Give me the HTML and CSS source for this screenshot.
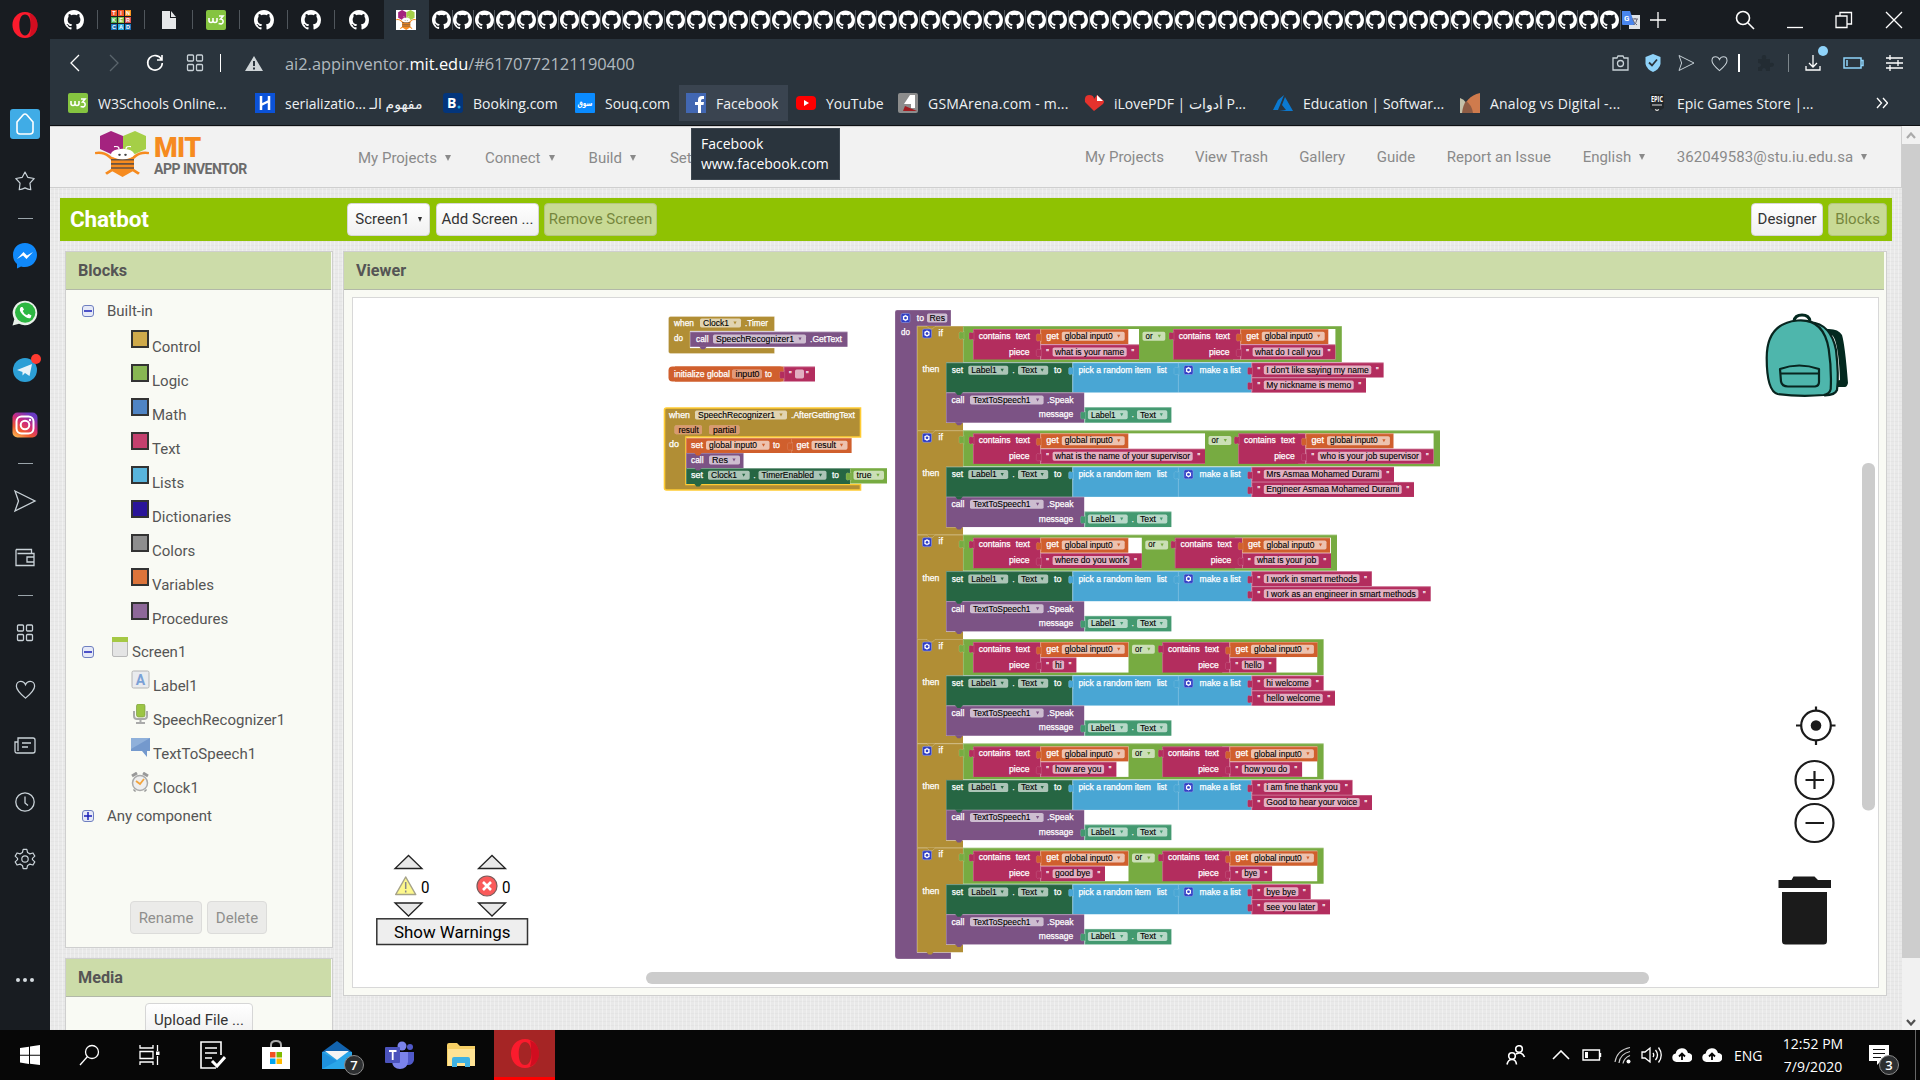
FILE: index.html
```html
<!DOCTYPE html>
<html lang="en">
<head>
<meta charset="utf-8">
<title>MIT App Inventor</title>
<link rel="stylesheet" href="styles.css">
</head>
<body>
<svg class="defs" width="0" height="0">
  <defs>
    <symbol id="gh" viewBox="0 0 16 16"><path fill="#fff" d="M8 0C3.58 0 0 3.58 0 8c0 3.54 2.29 6.53 5.47 7.59.4.07.55-.17.55-.38 0-.19-.01-.82-.01-1.49-2.01.37-2.53-.49-2.69-.94-.09-.23-.48-.94-.82-1.13-.28-.15-.68-.52-.01-.53.63-.01 1.08.58 1.23.82.72 1.21 1.87.87 2.33.66.07-.52.28-.87.51-1.07-1.78-.2-3.64-.89-3.64-3.95 0-.87.31-1.59.82-2.15-.08-.2-.36-1.02.08-2.12 0 0 .67-.21 2.2.82.64-.18 1.32-.27 2-.27s1.36.09 2 .27c1.53-1.04 2.2-.82 2.2-.82.44 1.1.16 1.92.08 2.12.51.56.82 1.27.82 2.15 0 3.07-1.87 3.75-3.65 3.95.29.25.54.73.54 1.48 0 1.07-.01 1.93-.01 2.2 0 .21.15.46.55.38A8.01 8.01 0 0 0 16 8c0-4.42-3.58-8-8-8z"/></symbol>
    <symbol id="w3" viewBox="0 0 20 20"><rect width="20" height="20" rx="2" fill="#85c440"/><path d="M3 8v2.500q0 2 2 2t2-2V8v2.500q0 2 2 2t2-2V8M13 6h4l-2.500 3q3 .3 2.600 3t-4.500 1.500" fill="none" stroke="#fff" stroke-width="1.600"/></symbol>
    <symbol id="bee" viewBox="0 0 54 56"><path d="M5 6 16 0l12 6v16l-12 6-11-6z" fill="#a4237f"/><path d="M28 6 40 0l11 6v16l-11 6-12-6z" fill="#a5cf47"/><path d="M0 27q8-2 14 4l6 6M54 27q-8-2-14 4l-6 6M11 52l9-7M44 52l-9-7" fill="none" stroke="#f68b1f" stroke-width="3"/><path d="M16 32h23v16l-11.500 8L16 48z" fill="#f68b1f"/><path d="M16 35h23M16 40h23M16 45h23" stroke="#6b5340" stroke-width="2"/><ellipse cx="27.500" cy="28" rx="11.500" ry="6.500" fill="#fff"/><path d="M24 22q0-4-5-3M31 22q0-4 5-3" stroke="#fff" stroke-width="1.300" fill="none"/><circle cx="24.500" cy="29" r="1.300" fill="#444"/><circle cx="30.500" cy="29" r="1.300" fill="#444"/></symbol>
    <symbol id="opera" viewBox="0 0 30 30"><path fill-rule="evenodd" fill="#fb1b2d" d="M15 0c8.500 0 14.500 7 14.500 15s-6 15-14.500 15S.5 23 .5 15 6.500 0 15 0zm0 3c-4.500 0-6.500 5.500-6.500 12s2 12 6.500 12 6.500-5.500 6.500-12-2-12-6.500-12z"/><path fill="#a70014" d="M20 1.500c6.500 2 9.500 7.500 9.500 13.500s-3 11.500-9.500 13.500c1.500-3 2-8.500 1.500-13.500S21.500 4.500 20 1.500z" opacity=".5"/></symbol>
    <symbol id="heart" viewBox="0 0 24 24"><path class="ln" d="M12 21C5 15 2.500 12 2.500 8.500 2.500 5.500 4.500 3.500 7 3.500c2.200 0 4 1.200 5 3.500 1-2.300 2.800-3.500 5-3.500 2.500 0 4.500 2 4.500 5C21.500 12 19 15 12 21z"/></symbol>
    <symbol id="send" viewBox="0 0 24 24"><path class="ln" d="M2 2l20 10L2 22l3.500-10z"/></symbol>
    <symbol id="grid" viewBox="0 0 18 18"><rect class="ln" x="1.500" y="1" width="6" height="6" rx="1"/><rect class="ln" x="10.500" y="1" width="6" height="6" rx="1"/><rect class="ln" x="1.500" y="10.500" width="6" height="6" rx="1"/><rect class="ln" x="10.500" y="10.500" width="6" height="6" rx="1"/></symbol>
    <symbol id="cloud" viewBox="0 0 20 14"><path fill="#fff" d="M4.500 14a4.300 4.300 0 0 1-.8-8.500A6.300 6.300 0 0 1 16 5a4.500 4.500 0 0 1 0 9z"/><path d="M10 12V6M7 8.500 10 5.500l3 3" stroke="#070707" stroke-width="1.800" fill="none"/></symbol>
  </defs>
</svg>

<div class="screen">
  <aside class="rail">
    <div class="rail-logo"><svg width="26" height="26"><use href="#opera"/></svg></div>
    <div class="ri"><span class="home"><svg width="30" height="30"><path class="ln w2" d="M7 13l6-7q2-2 4 0l6 7v9q0 3-3 3H10q-3 0-3-3z"/></svg></span></div>
    <div class="ri"><svg width="22" height="22" viewBox="0 0 24 24"><path class="ln" stroke-linejoin="round" d="M12 2.200l3 5.800 7 1.300-4.600 5 .9 7.200q-3-.2-6.300-2-3.300 1.800-6.300 2l.9-7.200L2 9.300 9 8z"/></svg></div>
    <div class="rd"></div>
    <div class="ri"><svg width="26" height="26"><path d="M13 0C5.500 0 1 5.500 1 12c0 4 1.500 7 4 9v4.500l4-2c9 2.500 16-4 16-11.500C25 5.500 20 0 13 0z" fill="#1089fa"/><path d="M5 16l6.500-7 3.500 3.500L21 9l-6.500 7-3.500-3.500z" fill="#fff"/></svg></div>
    <div class="ri"><svg width="26" height="26"><path d="M.5 25.500l1.800-6.300A12.300 12.300 0 1 1 7 23.800z" fill="#e9f1ea"/><circle cx="13.200" cy="12.600" r="10.200" fill="#2db742"/><path d="M9 7q-3 3 1.500 7.500T18.500 18l1-2.500-3-1.700-1.500 1.500q-3-1-4.300-4.300L12 9.500 10.500 7z" fill="#fff"/></svg></div>
    <div class="ri tg"><svg width="26" height="26"><circle cx="13" cy="14" r="12" fill="#2c9fd6"/><path d="M5 14l15-6-2.500 12-4.500-3-2.500 2.500V16z" fill="#e9f3f9"/></svg><i></i></div>
    <div class="ri"><svg width="26" height="26"><defs><linearGradient id="ig" x1="0" y1="1" x2=".6" y2="0"><stop offset="0" stop-color="#fdc95a"/><stop offset=".35" stop-color="#ef5a30"/><stop offset=".65" stop-color="#d02b7c"/><stop offset="1" stop-color="#6a3bc4"/></linearGradient></defs><rect x=".5" y=".5" width="25" height="25" rx="5" fill="url(#ig)"/><rect x="4.500" y="4.500" width="17" height="17" rx="5" fill="none" stroke="#fff" stroke-width="2"/><circle cx="13" cy="13" r="4.300" fill="none" stroke="#fff" stroke-width="2"/><circle cx="18" cy="8" r="1.200" fill="#fff"/></svg></div>
    <div class="rd"></div>
    <div class="ri"><svg width="24" height="24"><use href="#send"/></svg></div>
    <div class="ri"><svg width="22" height="20"><path class="ln" d="M2 1.500h15.500v4M2 1.500v16h18v-12H3.500M20 9h-7v5h7"/></svg></div>
    <div class="rd"></div>
    <div class="ri"><svg width="18" height="18"><use href="#grid"/></svg></div>
    <div class="ri"><svg width="23" height="23"><use href="#heart"/></svg></div>
    <div class="ri"><svg width="22" height="18"><path class="ln" d="M4 1h15q2 0 2 2v11q0 2-2 2H3q-2 0-2-2V5h3zM4 3v11M8 6h9M8 10h6"/></svg></div>
    <div class="ri"><svg width="22" height="22"><circle class="ln" cx="11" cy="11" r="9.200"/><path class="ln" d="M11 5.500V12l3 2.500"/></svg></div>
    <div class="ri"><svg width="22" height="22" viewBox="0 0 24 24"><path class="ln" stroke-linejoin="round" d="M10 1.500h4l.8 3.500 2.500 1.400 3.400-1 2 3.500-2.600 2.400v1.400l2.600 2.400-2 3.500-3.400-1-2.500 1.400-.8 3.500h-4L9.200 19l-2.500-1.400-3.400 1-2-3.500 2.600-2.400v-1.400L1.300 8.900l2-3.500 3.400 1L9.200 5z"/><circle class="ln" cx="12" cy="12" r="3.500"/></svg></div>
    <div class="dots"><i></i><i></i><i></i></div>
  </aside>

  <div class="browser">
    <div class="tabs">
      <div class="tab"><svg width="20" height="20"><use href="#gh"/></svg></div>
      <div class="tab"><svg width="20" height="20"><g><path fill="#f2562b" d="M0 0h6v6H0zM7 0h6v6H7z"/><path fill="#f7931e" d="M14 0h6v6h-6z"/><path fill="#4caf50" d="M0 7h6v6H0z"/><path fill="#8bc34a" d="M7 7h6v6H7z"/><path fill="#d9534f" d="M14 7h6v6h-6z"/><path fill="#1b75bb" d="M0 14h6v6H0zM14 14h6v6h-6z"/><path fill="#29abe2" d="M7 14h6v6H7z"/></g><g class="tk"><text x="3" y="5">T</text><text x="10" y="5">I</text><text x="17" y="5">N</text><text x="3" y="12">K</text><text x="10" y="12">E</text><text x="17" y="12">R</text><text x="3" y="19">C</text><text x="10" y="19">A</text><text x="17" y="19">D</text></g></svg></div>
      <div class="tab"><svg width="16" height="20"><path d="M1 1h8v7h6v11H1z" fill="#e6e8ea"/><path d="M10 1l5 6h-5z" fill="#e6e8ea"/></svg></div>
      <div class="tab"><svg width="20" height="20"><use href="#w3"/></svg></div>
      <div class="tab"><svg width="20" height="20"><use href="#gh"/></svg></div>
      <div class="tab"><svg width="20" height="20"><use href="#gh"/></svg></div>
      <div class="tab last"><svg width="20" height="20"><use href="#gh"/></svg></div>
      <div class="tab active"><span class="fav"><svg width="20" height="20"><use href="#bee"/></svg></span></div>
      <div class="many" id="many"></div>
      <div class="tr"><svg width="20" height="20"><rect x="8" y="5" width="11" height="14" fill="#dfe3e8"/><path d="M1 1h8l5 14H2q-1 0-1-1z" fill="#4a86ee"/><text x="3" y="11" font-size="8" font-weight="bold" fill="#fff">G</text><path d="M11 9h6M14 8v1M12.500 15q3-2 3.500-6M12 10q1 3 4 5" stroke="#667" fill="none"/></svg></div>
      <svg class="plus" width="16" height="16"><path class="ln w" d="M8 0v16M0 8h16"/></svg>
      <div class="wc">
        <svg width="20" height="20"><circle class="ln w2" cx="8" cy="8" r="6.500"/><path class="ln w2" d="M13 13l6 6"/></svg>
        <svg width="16" height="20"><path class="ln w" d="M0 17.500h16"/></svg>
        <svg width="18" height="18"><path class="ln w" d="M5 5V1.500h11.500V13H12M1 5h11v11.500H1z"/></svg>
        <svg width="18" height="18"><path class="ln w" d="M1 1l16 16M17 1L1 17"/></svg>
      </div>
    </div>

    <div class="bar">
      <div class="nav">
        <svg width="12" height="18"><path class="ln w" d="M10 1L2 9l8 8"/></svg>
        <svg width="12" height="18"><path class="ln dim" d="M2 1l8 8-8 8"/></svg>
        <svg width="18" height="18"><path class="ln w2" d="M15.500 5.500A7.300 7.300 0 1 0 16.300 9M16 1v5h-5"/></svg>
        <svg width="18" height="18"><use href="#grid"/></svg>
        <i class="sep"></i>
        <svg width="18" height="17"><path d="M9 1l9 15H0z" fill="#cfd5d8"/><path d="M9 6v5M9 12.500v2" stroke="#2a343d" stroke-width="2"/></svg>
        <span class="url">ai2.appinventor.<b>mit.edu</b>/#6170772121190400</span>
      </div>
      <div class="tools">
        <svg width="17" height="16"><path class="ln" d="M1 3h4l1-2h5l1 2h4v12H1z"/><circle class="ln" cx="8.500" cy="8.500" r="3"/></svg>
        <svg width="16" height="18"><path d="M8 0l7.500 3v7q-1 5-7.500 8Q1.500 15 .5 10V3z" fill="#8fd3fa"/><path d="M4 8.500l3 3 5-6" fill="none" stroke="#2a343d" stroke-width="1.800"/></svg>
        <svg width="19" height="18" viewBox="0 0 24 24"><use href="#send"/></svg>
        <svg width="19" height="19"><use href="#heart"/></svg>
        <i class="sep b"></i>
        <svg width="18" height="18"><path d="M2 5h4q-1-4 2-4t2 4h4v4q4-1 4 1.500T14 13v4h-4q0-3-2-3t-2 3H2v-4q3 0 3-2T2 9z" fill="#232c33"/></svg>
        <i class="sep g"></i>
        <div class="dl"><svg width="16" height="16"><path class="ln w" d="M8 0v12M4 8l4 4 4-4M1 11v4h14v-4"/></svg><i></i></div>
        <svg width="21" height="12"><path d="M1 1h17v10H1zM18 3.500h2v5h-2M4 3v6" fill="none" stroke="#8fd3fa" stroke-width="1.500"/></svg>
        <svg width="17" height="16"><path class="ln w" d="M0 3h17M0 8h17M0 13h17M4 0v5M12 5v6M4 10v6"/></svg>
      </div>
    </div>

    <div class="marks">
      <div class="bm"><svg width="20" height="20"><use href="#w3"/></svg><span>W3Schools Online...</span></div>
      <div class="bm m2"><svg width="20" height="20"><rect width="20" height="20" fill="#0b52d8"/><path d="M6 3v14M14 3v14M6 12l8-4" stroke="#fff" stroke-width="2.500"/></svg><span dir="ltr">serializatio... مفهوم الـ</span></div>
      <div class="bm"><svg width="20" height="20"><rect width="20" height="20" rx="3" fill="#03357c"/><text x="4" y="15" font-size="14" font-weight="bold" fill="#fff">B</text><circle cx="16" cy="14" r="1.500" fill="#1ba7e6"/></svg><span>Booking.com</span></div>
      <div class="bm"><svg width="20" height="20"><rect width="20" height="20" rx="1" fill="#0a8bff"/><text x="10" y="12.500" font-size="8" font-weight="bold" text-anchor="middle" textLength="15" lengthAdjust="spacingAndGlyphs" fill="#fff">سوق</text></svg><span>Souq.com</span></div>
      <div class="bm hover"><svg width="20" height="20"><rect width="20" height="20" fill="#4267b2"/><path d="M12 20v-8h-3V9h3V7q0-4 4-4h2v3h-1.500Q15 6 15 7.500V9h3l-.5 3H15v8z" fill="#fff"/></svg><span>Facebook</span>
        <div class="tip">Facebook<br>www.facebook.com</div></div>
      <div class="bm"><svg width="20" height="20"><rect y="3" width="20" height="14" rx="4" fill="#f00"/><path d="M8 7l5 3-5 3z" fill="#fff"/></svg><span>YouTube</span></div>
      <div class="bm wide"><svg width="20" height="20"><rect width="20" height="20" rx="2" fill="#8c8c8c"/><path d="M12 2h5v13h-4v-4H6z" fill="#fff"/><path d="M7 13l12 5H5z" fill="#a11d21"/></svg><span>GSMArena.com - m...</span></div>
      <div class="bm"><svg width="20" height="20"><path d="M10 18L1 9Q0 2 5 2t5 4l3-4 7 6q0 2-1 3z" fill="#e5322d"/><path d="M13 2v6h6z" fill="#fff"/></svg><span dir="ltr">iLovePDF | أدوات P...</span></div>
      <div class="bm az"><svg width="20" height="20"><path d="M11 2L5 7 0 17h5zM12 4l8 14H6l7-1-4-5z" fill="#0b79d0"/></svg><span>Education | Softwar...</span></div>
      <div class="bm wide"><svg width="20" height="20"><path d="M0 5q8 2 8 15H0z" fill="#c3c1aa"/><path d="M20 0v20H3Q5 3 20 0z" fill="#cf7b4d"/><path d="M6 8q6 4 7 12H2q1-8 4-12z" fill="#8e5c44"/></svg><span>Analog vs Digital -...</span></div>
      <div class="bm ep"><svg width="18" height="20"><path d="M2 1h14v14l-7 4-7-4z" fill="#22272b"/><text x="9" y="9" font-size="8.500" font-weight="bold" text-anchor="middle" textLength="12" lengthAdjust="spacingAndGlyphs" fill="#fff">EPIC</text><path d="M4 12h10M7 16.500l2 1 2-1" stroke="#ddd" stroke-width="1.200" fill="none"/></svg><span>Epic Games Store |...</span></div>
      <svg class="more" width="12" height="12"><path class="ln w" d="M1 1l4.500 5L1 11M7 1l4.500 5L7 11"/></svg>
    </div>

    <div class="page">
      <div class="content">
        <header class="head">
          <div class="logo"><svg width="54" height="46" viewBox="0 0 54 56" preserveAspectRatio="none"><use href="#bee"/></svg><div><b>MIT</b><em>APP INVENTOR</em></div></div>
          <nav class="lnav"><span>My Projects<i></i></span><span>Connect<i></i></span><span>Build<i></i></span><span>Set</span></nav>
          <nav class="rnav"><span>My Projects</span><span>View Trash</span><span>Gallery</span><span>Guide</span><span>Report an Issue</span><span>English<i></i></span><span class="mailto">362049583@stu.iu.edu.sa<i></i></span></nav>
        </header>
        <div class="green">
          <h1>Chatbot</h1>
          <button class="btn s1">Screen1<i></i></button><button class="btn s2">Add Screen ...</button><button class="btn s3 off">Remove Screen</button>
          <button class="btn s4">Designer</button><button class="btn s5 off">Blocks</button>
        </div>
        <div class="cols">
          <div class="left">
            <section class="panel blocks">
              <h2>Blocks</h2>
              <div class="tree" id="tree"></div>
              <div class="acts"><button class="btn dis">Rename</button><button class="btn dis">Delete</button></div>
            </section>
            <section class="panel media"><h2>Media</h2><button class="btn up">Upload File ...</button></section>
          </div>
          <section class="panel viewer">
            <h2>Viewer</h2>
            <div class="canvas"><svg id="ws" width="1525" height="689" viewBox="353 298 1525 689"></svg></div>
          </section>
        </div>
      </div>
      <div class="scroll"><span><svg width="10" height="7"><path d="M1 6l4-4.500L9 6" fill="none" stroke="#aaa" stroke-width="2.200"/></svg></span><i></i><span class="dn"><svg width="10" height="7"><path d="M1 1l4 4.500L9 1" fill="none" stroke="#505050" stroke-width="2.200"/></svg></span></div>
    </div>
  </div>
</div>

<footer class="taskbar">
  <div class="ti"><svg width="20" height="20"><path d="M0 3l9-1.300v8H0zM10 1.500L20 0v9.700H10zM0 10.700h9v8.200L0 17.500zM10 10.700h10V20l-10-1.300z" fill="#fff"/></svg></div>
  <div class="ti"><svg width="22" height="22"><circle class="ln w" cx="13" cy="8" r="6.500"/><path class="ln w" d="M8.500 12.500L1 21"/></svg></div>
  <div class="ti"><svg width="22" height="22"><path class="ln w" d="M1 1v3h13V1M1 7.500h13v7H1zM1 21v-3h13v3M18.500 1v6M18.500 12v9"/><rect x="17" y="7.500" width="3.500" height="3.500" fill="#fff"/></svg></div>
  <div class="ti t4"><svg width="26" height="28"><path class="ln w2" d="M21 14V1H1v26h15M5 7h12M5 12h12M5 17h7"/><path d="M12 20l5 5 8-9" fill="none" stroke="#fff" stroke-width="3"/></svg></div>
  <div class="ti t5"><svg width="30" height="30"><path d="M10 8V5q0-4 5-4t5 4v3" fill="none" stroke="#aaa" stroke-width="2"/><path d="M1 7h28v22H1z" fill="#fff"/><path fill="#f25022" d="M9 12h5.500v5.500H9z"/><path fill="#7fba00" d="M15.500 12H21v5.500h-5.500z"/><path fill="#00a4ef" d="M9 18.500h5.500V24H9z"/><path fill="#ffb900" d="M15.500 18.500H21V24h-5.500z"/></svg></div>
  <div class="ti mail"><svg width="30" height="28"><path d="M0 11L15 0l15 11z" fill="#1263ae"/><path d="M0 11h30v17H0z" fill="#2aa5e8"/><path d="M3 10h24L15 19z" fill="#f4f4f4"/><path d="M0 11l15 9L0 28z" fill="#1e90dc"/></svg><i>7</i></div>
  <div class="ti"><svg width="30" height="28"><circle cx="18" cy="5" r="4.500" fill="#7b83eb"/><circle cx="26" cy="6" r="3" fill="#5059c9"/><path d="M21 11h9v8q-1 5-6 5h-3z" fill="#5059c9"/><path d="M9 11h15v10q-1 7-8 7t-8-7z" fill="#7b83eb"/><rect x="1" y="6" width="15" height="16" rx="1" fill="#4b53bc"/><path d="M5 10h7.500M8.700 10v9" stroke="#fff" stroke-width="1.800"/></svg></div>
  <div class="ti"><svg width="28" height="24"><path d="M0 2q0-2 2-2h8l3 3h15v20H0z" fill="#f5cf65"/><path d="M1 6h27v17H1z" fill="#ffe394"/><path d="M5 24v-8q0-2 2-2h14q2 0 2 2v8h-5v-4h-8v4z" fill="#3fb2e3"/></svg></div>
  <div class="ti op"><svg width="30" height="29"><use href="#opera"/></svg></div>
  <div class="tray">
    <svg class="pp" width="20" height="20"><circle class="ln w2" cx="13" cy="4" r="3.300"/><circle class="ln w2" cx="6" cy="11" r="3.300"/><path class="ln w2" d="M1 19.500q1-5 5-5t4.500 5M10 9q6-3 8.500 3"/></svg>
    <svg width="18" height="10"><path class="ln w2" d="M1 9l8-8 8 8"/></svg>
    <svg width="20" height="12"><path d="M1 1h16.500v10H1zM18.500 4v4" fill="none" stroke="#fff" stroke-width="1.400"/><path d="M3 3h3v6H3z" fill="#fff"/></svg>
    <svg width="18" height="18"><path d="M1 16Q3 4 16 1.500M5 17Q6 8 16 5.500M9 17.500Q10 12 16 9.500" fill="none" stroke="#ccc" stroke-width="1.200"/><circle cx="14.500" cy="15.500" r="2" fill="#fff"/></svg>
    <svg width="21" height="18"><path class="ln w" d="M1 6h3l5-4v14l-5-4H1zM12 7q1.500 2 0 4M14.500 4q4 5 0 10M17.500 1.500q5.500 7.500 0 15"/></svg>
    <svg width="20" height="14"><use href="#cloud"/></svg>
    <svg width="20" height="14"><use href="#cloud"/></svg>
    <span class="eng">ENG</span>
    <span class="clock">12:52 PM<br>7/9/2020</span>
    <div class="note"><svg width="20" height="20"><path d="M0 0h20v16h-8l-4 4v-4H0z" fill="#fff"/><path d="M4 4.500h12M4 8.500h12M4 12.500h8" stroke="#111" stroke-width="1.200"/></svg><i>3</i></div>
    <div class="peek"></div>
  </div>
</footer>
<script src="app.js"></script>
</body>
</html>
```
FILE: styles.css
```css
* { box-sizing: border-box; }
body { margin: 0; width: 1920px; height: 1080px; overflow: hidden; font-family: Roboto, sans-serif; font-size: 15px; background: #070707; }
svg { display: block; flex: none; }
i, em { font-style: normal; }
.defs { position: absolute; }
.ln { fill: none; stroke: #c9d2d8; stroke-width: 1.3; }
.ln.w { stroke: #fff; }
.ln.w2 { stroke: #fff; stroke-width: 1.6; }
.ln.dim { stroke: #5a646c; }
.screen { display: flex; height: 1030px; }

.rail { width: 50px; background: #181c21; display: flex; flex-direction: column; align-items: center; }
.rail-logo { height: 96px; padding-top: 12px; }
.ri { height: 56.35px; display: flex; align-items: center; justify-content: center; position: relative; }
.rd { height: 19.5px; width: 15px; display: flex; align-items: center; }
.rd::after { content: ""; width: 15px; height: 1px; background: #9aa4aa; }
.home { width: 30px; height: 30px; border-radius: 3px; background: #40ace6; }
.tg i { position: absolute; right: -3px; top: 13px; width: 10px; height: 10px; border-radius: 5px; background: #ff3b30; }
.dots { display: flex; gap: 3px; margin-top: 91px; }
.dots i { width: 4px; height: 4px; border-radius: 2px; background: #d5dbe0; }

.browser { flex: 1; display: flex; flex-direction: column; min-width: 0; }
.tabs { height: 39px; background: #181c21; display: flex; align-items: center; }
.tab { width: 47.5px; height: 38px; display: flex; align-items: center; justify-content: center; position: relative; flex: none; }
.tab::after { content: ""; position: absolute; right: 0; top: 9px; width: 1px; height: 19px; background: #50565c; }
.tab.last::after, .tab.active::after { display: none; }
.tab.active { width: 45px; margin-left: 1px; background: #2a343d; height: 39px; }
.fav { background: #fff; }
.tk { font: bold 5.500px "Liberation Sans", sans-serif; fill: #fff; text-anchor: middle; }
.many { display: flex; width: 1189.5px; margin-left: 3px; flex: none; }
.many span { width: 21.24px; display: flex; justify-content: center; border-right: 1px solid #50565c; flex: none; }
.tr { width: 22px; }
.plus { margin-left: 7px; margin-right: 69px; }
.wc { display: flex; gap: 32px; align-items: center; }

.bar { height: 46px; background: #2a343d; display: flex; align-items: center; justify-content: space-between; padding: 2px 17px 0 19px; }
.nav, .tools { display: flex; align-items: center; }
.nav svg:nth-child(2) { margin-left: 27px; }
.nav svg:nth-child(3) { margin-left: 26px; }
.nav svg:nth-child(4) { margin-left: 22px; }
.sep { width: 1px; height: 18px; background: #fff; margin: 0 24px 0 16px; }
.sep.b { width: 2px; margin: 0 16px 0 9px; }
.sep.g { background: #7d868c; margin: 0 16px 0 14px; }
.url { font-family: "Open Sans", sans-serif; font-size: 16.4px; color: #b1b9bf; margin-left: 22px; white-space: nowrap; }
.url b { color: #fff; font-weight: 400; }
.tools svg:nth-child(2), .tools svg:nth-child(3) { margin-left: 16px; }
.tools svg:nth-child(4) { margin-left: 14px; }
.dl { position: relative; }
.dl i { position: absolute; left: 13px; top: -9px; width: 10px; height: 10px; border-radius: 5px; background: #8fd3fa; }
.dl + svg { margin-left: 22px; margin-right: 22px; }

.marks { height: 41px; background: #2a343d; border-bottom: 1px solid #0d1013; display: grid; grid-template-columns: 187px 188px 132px 111px 110px 102px 186px 189px 187px 188px 228px 20px; align-items: start; padding: 0 0 0 18px; font: 14px "Open Sans", "Noto Sans", "DejaVu Sans", sans-serif; color: #eef1f3; position: relative; }
.bm { display: flex; align-items: center; gap: 10px; height: 36px; white-space: nowrap; }
.bm.wide { letter-spacing: .2px; }
.bm.ep { gap: 11px; }
.bm.hover { background: #3a4450; margin-left: -7px; margin-right: 8px; padding-left: 7px; position: relative; gap: 10px; }
.tip { position: absolute; left: 12px; top: 43px; width: 149px; height: 52px; padding: 5px 9px; background: #2a343d; border: 1px solid #3c464f; color: #fff; line-height: 20px; z-index: 5; }
.more { margin-top: 12px; }

.page { flex: 1; display: flex; overflow: hidden; }
.content { width: 1852px; background-color: #e9e9e9; background-image: repeating-linear-gradient(90deg, rgba(255,255,255,.35) 0 1px, transparent 1px 4px), repeating-linear-gradient(0deg, rgba(0,0,0,.025) 0 1px, transparent 1px 4px); }
.scroll { width: 18px; background: #f1f1f1; display: flex; flex-direction: column; align-items: center; }
.scroll span { height: 18px; display: flex; align-items: center; }
.scroll > i { width: 18px; height: 814px; background: #cdcdcd; }
.scroll .dn { margin-top: auto; height: 16px; }

.head { height: 62px; background: #f2f2f2; border: 1px solid #cfcfcf; border-left: 0; display: flex; align-items: center; color: #8a8a8a; }
.logo { display: flex; padding-left: 45px; width: 308px; gap: 5px; padding-bottom: 6px; flex: none; }
.logo div { display: flex; flex-direction: column; }
.logo b { color: #f68b1f; font-size: 27px; line-height: 27px; margin-top: 4px; letter-spacing: -.6px; font-weight: 900; }
.logo em { color: #6b6b6b; font-weight: 700; font-size: 14px; line-height: 16px; letter-spacing: -.5px; white-space: nowrap; margin-top: -1px; }
.lnav, .rnav { display: flex; white-space: nowrap; }
.lnav { gap: 34px; width: 727px; padding-top: 1px; flex: none; }
.rnav { gap: 31px; }
.rnav span:nth-child(n+4) { margin-left: .6px; }
.rnav .mailto { letter-spacing: .08px; margin-left: 3px; }
.head nav i, .btn i { display: inline-block; border: 3px solid transparent; border-top: 6px solid #8a8a8a; border-bottom: 0; margin-left: 8px; vertical-align: 2px; }
.green { margin: 10px 10px 0; height: 43px; background: #8fc202; display: flex; align-items: center; padding: 0 0 1px 10px; }
.green h1 { margin: 0; width: 277px; font-size: 22.5px; color: #fff; letter-spacing: -.2px; }
.btn { font: 15px Roboto, sans-serif; color: #333; height: 33px; border: 1px solid #d6d6d6; border-radius: 4px; background: linear-gradient(#fff, #f0f0f0); padding: 0; white-space: nowrap; }
.btn i { border-width: 5px 2.5px 0; border-top-color: #333; margin-left: 8px; }
.btn.off { background: #c8da95; border-color: #b4c67f; color: #76873d; }
.btn.dis { background: #ebebe9; border-color: #dcdcda; color: #8f8f8d; }
.s1 { width: 83px; } .s2 { width: 103px; margin-left: 6px; } .s3 { width: 113px; margin-left: 5px; }
.s4 { width: 72px; margin-left: 1094px; } .s5 { width: 59px; margin-left: 5px; }

.cols { display: flex; padding: 10px 0 0 15px; gap: 10px; }
.left { width: 268px; display: flex; flex-direction: column; gap: 10px; }
.panel { background: #f9faf4; border: 1px solid #cfcfcf; }
.panel h2 { margin: 0 1px 0 0; height: 38px; line-height: 37px; padding-left: 12px; font-size: 16.2px; color: #555; background: #ccdca9; border-bottom: 1px solid #b2b8a8; }
.blocks { height: 697px; display: flex; flex-direction: column; }
.tree { flex: 1; padding: 4px 0 0 16px; color: #555; }
.row { display: flex; align-items: center; height: 34px; }
.row:first-child { margin-bottom: 1px; }
.row .tg2 { width: 12px; height: 12px; border: 1.5px solid #6f7fc0; border-radius: 3px; background: #e6e9f7; display: flex; align-items: center; justify-content: center; margin-top: -1px; }
.row.child { padding-left: 49px; gap: 3px; align-items: flex-start; }
.row.child span { padding-top: 9px; }
.row.child svg + span { padding-top: 8px; }
.sw { width: 18px; height: 18px; border: 2px solid #333; margin-top: 1px; }
.row.child svg { margin-top: 1px; }
.acts { display: flex; gap: 5px; padding: 0 0 13px 64px; }
.acts .btn:nth-child(1) { width: 72px; } .acts .btn:nth-child(2) { width: 60px; }
.media { height: 140px; display: flex; flex-direction: column; }
.up { margin: 6px 0 0 79px; width: 108px; }
.viewer { width: 1544px; height: 745px; }
.viewer h2 { margin-right: 2px; }
.canvas { margin: 7px 8px 0; background: #fff; border: 1px solid #d8d8d8; height: 691px; width: 1527px; }
.canvas text { font: 8.5px "Liberation Sans", sans-serif; fill: #000; }
.canvas text.d { stroke: #000; stroke-width: .12px; }
.canvas text.l { fill: #fff; stroke: #fff; stroke-width: .25px; }
.canvas text.ui { font: 16.500px Roboto, sans-serif; }

.taskbar { height: 50px; background: #070707; display: flex; color: #fff; font-family: "Open Sans", sans-serif; }
.ti { width: 62px; display: flex; align-items: center; justify-content: center; position: relative; }
.ti:nth-child(1) { width: 60px; } .ti:nth-child(2) { width: 60px; } .ti:nth-child(3) { width: 60px; }
.ti.t4 { width: 66px; }
.ti.t5 { width: 60px; }
.ti.op { background: #a52525; border-bottom: 3px solid #f00; margin-left: 2px; width: 61px; }
.ti.mail i, .note i { position: absolute; left: 38px; top: 25px; width: 20px; height: 20px; border-radius: 50%; background: #2d2f31; border: 1px solid #8a8a8a; font-size: 13px; font-weight: 600; line-height: 18px; text-align: center; }
.tray { margin-left: auto; display: flex; align-items: center; font-size: 14.5px; }
.tray svg { margin-right: 10px; }
.tray .pp { margin-right: 26px; }
.tray svg:nth-child(2) { margin-right: 12px; }
.tray svg:nth-child(3) { margin-right: 12px; }
.tray svg:nth-child(4) { margin-right: 9px; }
.eng { width: 29px; margin-left: 2px; font-size: 14px; }
.clock { text-align: center; line-height: 23px; width: 62px; margin-left: 19px; white-space: nowrap; font-size: 14px; }
.note { margin-left: 25px; width: 46px; position: relative; height: 50px; padding-top: 15px; }
.note i { left: 10px; }
.peek { width: 5px; height: 50px; border-left: 1px solid #666; }
```
FILE: app.js
```js
// Narrow GitHub tabs
document.getElementById('many').innerHTML =
  '<span><svg width="19" height="20"><use href="#gh"/></svg></span>'.repeat(56);

// Blocks tree
const toggle = plus => `<div class="tg2"><svg width="8" height="8"><path d="M0 4h8${plus ? 'M4 0v8' : ''}" stroke="#1a1fb8" stroke-width="1.500"/></svg></div>`;
const swatches = [['Control', '#cfaa4b'], ['Logic', '#88b653'], ['Math', '#4f84c4'], ['Text', '#c4406e'], ['Lists', '#58b4dc'],
  ['Dictionaries', '#2a1599'], ['Colors', '#8e8e8e'], ['Variables', '#dc743a'], ['Procedures', '#8e6899']];
const comps = [
  ['Label1', '<rect x="1" y="1" width="17" height="17" rx="1.500" fill="#e9ebee" stroke="#b4b4b4"/><text x="9.500" y="14.500" font-size="14" font-weight="bold" text-anchor="middle" fill="#7ba1d6">A</text>'],
  ['SpeechRecognizer1', '<path d="M3 7v5q0 3 3 3h7q3 0 3-3V7M9.500 15v3M5 19h9" fill="none" stroke="#aaa" stroke-width="2"/><rect x="5.500" y="0" width="8.500" height="13" rx="2" fill="#9cc544" stroke="#7d9b43" stroke-width=".7"/>'],
  ['TextToSpeech1', '<path d="M0 0h19v13h-3v6l-5-6H0z" fill="#7499cd"/><path d="M0 0h19L0 11z" fill="#8fb0da"/>'],
  ['Clock1', '<circle cx="9" cy="11" r="7.500" fill="#efefef" stroke="#aaa" stroke-width="1.500"/><path d="M1 4l5-3M17 4l-5-3M4 18l-1 1M14 18l1 1" stroke="#999" stroke-width="3"/><path d="M5 9l4 3 4-5" fill="none" stroke="#f3a43c" stroke-width="1.800"/>']];
let t = `<div class="row">${toggle(0)}<span style="margin-left:13px">Built-in</span></div>`;
swatches.forEach(([n, c]) => t += `<div class="row child"><div class="sw" style="background:${c}"></div><span>${n}</span></div>`);
t += `<div class="row">${toggle(0)}<svg style="margin:-10px 4px 0 18px" width="16" height="20"><rect x=".5" y=".5" width="15" height="19" rx="1.500" fill="#e4e4e4" stroke="#b8b8b8"/><path d="M0 0h16v5H0z" fill="#a5c844"/></svg><span>Screen1</span></div>`;
comps.forEach(([n, g]) => t += `<div class="row child"><svg width="19" height="20">${g}</svg><span>${n}</span></div>`);
t += `<div class="row" style="height:22px">${toggle(1)}<span style="margin-left:13px">Any component</span></div>`;
document.getElementById('tree').innerHTML = t;

// Block workspace
const C = { proc: '#7c5385', ctl: '#b18e35', vr: '#d05f2d', txt: '#b32d5e', log: '#77ab41', set: '#266643', lst: '#49a6d4', get: '#439970' };
let o = '';
const R = (x1, y1, x2, y2, c, extra = '') => o += `<rect x="${x1}" y="${y1}" width="${x2 - x1}" height="${y2 - y1}" fill="${c}" ${extra}/>`;
const B = (x1, y1, x2, y2, c) => { R(x1, y1, x2, y2, c); o += `<path d="M${x1 + .4} ${y2}V${y1 + .4}H${x2}" fill="none" stroke="#fff" stroke-opacity=".3" stroke-width=".8"/>`; };
const P = (d, c, extra = 'stroke="#fff" stroke-opacity=".3" stroke-width=".8"') => o += `<path d="${d}" fill="${c}" ${extra}/>`;
const T = (x1, x2, y, s, cls = 'l') => o += `<text class="${cls}" x="${x1}" y="${y}" textLength="${x2 - x1}" lengthAdjust="spacingAndGlyphs">${s}</text>`;
const pill = (x1, x2, y, c = '#fff', h = 9) => R(x1, y, x2, y + h, c, 'rx="1.700" fill-opacity=".62"');
const arrow = (x, y, c) => o += `<path d="M${x - 1.6} ${y - 1.5}h3.200l-1.600 3z" fill="${c}"/>`;
const drop = (x1, x2, tx2, y, s, c) => { pill(x1, x2, y); T(x1 + 3, tx2, y + 7.3, s, 'd'); arrow(x2 - 6, y + 4.5, c); };
const tab = (x, y, c) => o += `<path d="M${x + 1} ${y + 4}q-1 2-2.500 1t-2.500 1v5q1 2 2.500 1t2.500 1z" fill="${c}" stroke="#fff" stroke-opacity=".2" stroke-width=".6"/>`;
const notch = (x, y, c) => o += `<path d="M${x} ${y - .5}h8l-2.500 3h-3z" fill="${c}"/>`;
const gear = (x, y) => { R(x, y, x + 9, y + 9, '#2f3ec4', 'rx="1.500" stroke="#8f9be8" stroke-width=".6"'); o += `<circle cx="${x + 4.5}" cy="${y + 4.5}" r="2" fill="none" stroke="#fff" stroke-width="1.300"/><path d="M${x + 4.5} ${y + 1.3}v6.400M${x + 1.7} ${y + 2.9}l5.600 3.200M${x + 1.7} ${y + 6.1}l5.600-3.200" stroke="#fff" stroke-width=".6"/><circle cx="${x + 4.5}" cy="${y + 4.5}" r="1.200" fill="#2f3ec4"/>`; };
const str = (x, y, r, s) => { B(x, y, r, y + 15, C.txt); tab(x, y, C.txt); T(x + 6, x + 8.6, y + 10.5, '"'); pill(x + 12.3, r - 12.3, y + 3); T(x + 14.8, r - 14.8, y + 10.3, s, 'd'); T(r - 7.6, r - 5, y + 10.5, '"'); };

// when Clock1.Timer
P('M670.500 316.500H774.500V331H690V348H774.500V353.500H670.500Q668.500 353.500 668.500 351.500V318.500Q668.500 316.500 670.500 316.500z', C.ctl);
T(674, 694, 326, 'when'); drop(700, 741, 729, 318.5, 'Clock1', C.ctl); T(745, 768, 326, '.Timer');
T(674, 683, 341, 'do'); B(690, 331.7, 847.5, 346.8, C.proc); notch(699, 346.8, C.proc);
T(696, 708.5, 341.5, 'call'); drop(713, 806, 794, 334.5, 'SpeechRecognizer1', C.proc); T(810, 842, 341.5, '.GetText');
// initialize global
R(668.5, 366.5, 783.7, 381.5, C.vr, 'rx="4"'); R(675, 366.5, 783.7, 381.5, C.vr);
T(674, 730, 376.8, 'initialize global'); pill(732, 762, 369.500, '#fff'); R(732, 369.5, 762, 378.5, C.vr, 'rx="1.700" fill-opacity=".4"'); T(735.500, 759.500, 376.8, 'input0', 'd'); T(765, 772, 376.8, 'to');
B(783.7, 366.5, 815, 381.5, C.txt); tab(783.7, 366.5, C.txt); T(789, 791.600, 377, '"'); pill(795, 804, 369.5); T(806, 808.600, 377, '"');
// when SpeechRecognizer1.AfterGettingText
P('M666.500 408H860.500V437H686V484.500H860.500V490H666.500Q664.500 490 664.500 488V410Q664.500 408 666.500 408z', C.ctl, 'stroke="#fc3" stroke-width="1.600"');
T(669, 690, 418, 'when'); drop(695, 787, 775, 410.500, 'SpeechRecognizer1', C.ctl); T(791, 855, 418, '.AfterGettingText');
[[674.5, 702, 'result'], [709, 739.5, 'partial']].forEach(([a, b, s]) => { pill(a, b, 425.3); R(a, 425.3, b, 434.3, C.vr, 'rx="1.700" fill-opacity=".5"'); T(a + 4, b - 3.3, 432.6, s, 'd'); });
T(669, 679, 447, 'do');
B(686, 438, 851.6, 453, C.vr); R(791, 438.500, 791.600, 453, '#e08a63'); T(691, 703, 448, 'set'); drop(706, 769.5, 757, 440.8, 'global input0', C.vr); T(773, 780, 448, 'to'); tab(791.500, 438, C.vr);
T(796.500, 809, 448, 'get'); drop(811.500, 847.5, 836, 440.8, 'result', C.vr);
B(686, 453, 743.5, 468, C.proc); notch(694, 453, C.vr); T(691, 703.500, 462.7, 'call'); drop(709, 740, 728, 455.500, 'Res', C.proc);
B(686, 468.2, 850, 484, C.set); notch(694, 468, C.proc); notch(694, 484, C.set);
T(691, 703, 478, 'set'); drop(708, 749.7, 737, 470.800, 'Clock1', C.set); T(753.500, 755.500, 478, '.'); drop(758.500, 826.5, 814, 470.800, 'TimerEnabled', C.set); T(832, 839, 478, 'to');
B(850, 468, 887, 483.500, C.log); tab(850, 468, C.log); drop(853.500, 884, 871.500, 470.800, 'true', C.log);

// to Res
P('M897 310H951V326H917V952.500H951V959H898Q895 959 895 956V312Q895 310 897 310z', C.proc);
gear(901, 313.5); T(916.8, 924, 321, 'to'); pill(927, 947.3, 313.5); T(929.5, 945, 320.8, 'Res', 'd'); T(901, 910, 335, 'do');
// [cond1, right, cond2 left, right, contains right, or right, list1, right, list2, right]
const rows = [
  ['what is your name', 1139, 1173, 'what do I call you', 1335.4, 1335.4, 1341.8, 'I don\'t like saying my name', 1383.6, 'My nickname is memo', 1366],
  ['what is the name of your supervisor', 1205, 1238.2, 'who is your job supervisor', 1433.6, 1433.6, 1440, 'Mrs Asmaa Mohamed Durami', 1394, 'Engineer Asmaa Mohamed Durami', 1414],
  ['where do you work', 1141.8, 1174.8, 'what is your job', 1331, 1331, 1337, 'I work in smart methods', 1371.8, 'I work as an engineer in smart methods', 1430.7],
  ['hi', 1076.4, 1162.2, 'hello', 1276.4, 1317.2, 1323.6, 'hi welcome', 1323.6, 'hello welcome', 1335],
  ['how are you', 1116.4, 1162.2, 'how you do', 1302.1, 1317.2, 1323.6, 'i am fine thank you', 1352.5, 'Good to hear your voice', 1372],
  ['good bye', 1105, 1162.2, 'bye', 1272.1, 1317.2, 1323.6, 'bye bye', 1310.7, 'see you later', 1330]];
const cond = (x, y, s, r) => {
  B(x, y + 3, x + 67.3, y + 33.5, C.txt); tab(x, y + 1.5, C.txt);
  T(x + 5.7, x + 37.500, y + 12.7, 'contains'); T(x + 42.8, x + 56.8, y + 12.7, 'text'); T(x + 36, x + 56.5, y + 28.5, 'piece');
  const g = x + 67.3;
  B(g, y + 3, g + 88, y + 18, C.vr); tab(g, y + 3, C.vr); T(g + 6, g + 18.500, y + 12.7, 'get'); drop(g + 21.5, g + 84.4, g + 72.3, y + 5.8, 'global input0', C.vr);
  str(g, y + 18.4, r, s);
};
rows.forEach((q, i) => {
  const y = 326 + i * 104.35;
  P(`M917 ${y}H963V${y + 36.500}H946V${y + 97}H963V${y + 104.4}H917z`, C.ctl, '');
  o += `<path d="M917.400 ${y + 104}V${y + .4}H927l2.500 2.500h3l2.500-2.500H963" fill="none" stroke="#fff" stroke-opacity=".3" stroke-width=".8"/>`;
  gear(922.5, y + 3); T(938.6, 943, y + 9.7, 'if'); T(922.5, 939.3, y + 46, 'then');
  B(963, y, q[6], y + 36, C.log); tab(963, y + 1, C.log);
  const a = Math.max(q[1], 1128.5);
  R(1040, y + 3, a, y + 33.5, '#fff'); R(q[2] + 60, y + 3, q[5], y + 33.5, '#fff');
  cond(973, y, q[0], q[1]); cond(q[2], y, q[3], q[4]);
  pill(a + 3.5, a + 26.3, y + 5.7); T(a + 6.5, a + 13.5, y + 12.500, 'or', 'd'); arrow(a + 20.300, y + 10.2, C.log);
  // set Label1.Text
  B(946, y + 36.5, 1072.5, y + 66.5, C.set);
  T(951.8, 963, y + 46.8, 'set'); drop(968.3, 1008.2, 996.8, y + 39.7, 'Label1', C.set); T(1012.500, 1014.500, y + 46.8, '.'); drop(1018, 1048.2, 1036.8, y + 39.7, 'Text', C.set); T(1054, 1061.5, y + 46.8, 'to');
  B(1072.5, y + 36.5, 1178, y + 66.5, C.lst); tab(1072.5, y + 36.500, C.lst); T(1078.6, 1151, y + 46.8, 'pick a random item'); T(1157, 1166.8, y + 46.8, 'list');
  B(1178, y + 36.5, 1251.5, y + 66.5, C.lst); tab(1178, y + 36.500, C.lst); gear(1184, y + 39.500); T(1199.6, 1240.7, y + 46.8, 'make a list');
  str(1251.5, y + 36.5, q[8], q[7]); str(1251.5, y + 51.6, q[10], q[9]);
  // call TextToSpeech1.Speak
  B(946, y + 66.5, 1084.2, y + 96.7, C.proc); notch(955, y + 66.5, C.set); notch(955, y + 96.7, C.proc);
  T(951.5, 964.3, y + 76.8, 'call'); drop(970, 1043.6, 1030.5, y + 69.5, 'TextToSpeech1', C.proc); T(1047, 1073.6, y + 76.8, '.Speak'); T(1038.8, 1073.3, y + 91.3, 'message');
  B(1084.5, y + 81.2, 1171.4, y + 96.700, C.get); tab(1084.5, y + 81, C.get); drop(1087.9, 1127.7, 1115.7, y + 84.2, 'Label1', C.get); T(1131.700, 1133.700, y + 91.3, '.'); drop(1137, 1167.3, 1156, y + 84.2, 'Text', C.get);
});
notch(926, 952, C.ctl);

// Warning indicators
const tri = (x, y, up) => P(up ? `M${x} ${y + 13.500}h27l-13.500-13z` : `M${x} ${y}h27l-13.500 13z`, '#e8e8e8', 'stroke="#222" stroke-width="1.300"');
tri(395, 855, 1); tri(478.5, 855, 1); tri(395, 903, 0); tri(478.5, 903, 0);
P('M405.700 877l10 17.500h-20z', '#fdf88c', 'stroke="#a5a28a" stroke-width="1.500" stroke-linejoin="round"'); P('M405.700 882v7M405.700 890.500v2', 'none', 'stroke="#888" stroke-width="1.500"');
o += '<circle cx="487" cy="886" r="10" fill="#fa5a5a" stroke="#7a5a5a" stroke-width="1.200"/><path d="M483 882l8 8M491 882l-8 8" stroke="#fff" stroke-width="2.600"/>';
T(421, 429.5, 892.5, '0', 'ui'); T(502, 510.5, 892.5, '0', 'ui');
R(376.8, 918.8, 527.5, 944.5, '#eee', 'stroke="#333" stroke-width="1.500"'); T(394, 510.5, 938, 'Show Warnings', 'ui');

// Backpack
const K = 'stroke="#08251f" stroke-width="2.200" stroke-linejoin="round"';
P('M1826 329q12-1 16 6 3 10 6 48-1 4-3 4h-9v-6l4-1q-1-28-5-40-2-6-6-5z', '#03291f', '');
P('M1794 321q1-6 8-6t8 6', 'none', 'stroke="#03291f" stroke-width="3"');
P('M1810 322q21 2 26 28 3 26 1 40-2 5-12 5.500z', '#4eb6ac', K);
P('M1766.700 358q0-35 31-37.500 26-2 31 28.500 3 20 2 40-1 5-7 6-24 2-46-1-11-3-11-36z', '#4eb6ac', K);
P('M1780 369q19-7 39 0v13q0 4-4 4.500h-27q-6 0-7-5zM1781 373.500h38', 'none', K);
// Zoom controls and trash
o += '<g fill="none" stroke="#1b1b1b" stroke-width="2.200"><circle cx="1816" cy="725.500" r="14.800"/><path d="M1816 706.500v4.500M1816 740v5M1796 725.500h5M1831 725.500h4.500M1805.500 780h18.500M1814.500 771v18M1805.500 823h18.500"/><circle cx="1814.500" cy="780" r="19"/><circle cx="1814.500" cy="823" r="19"/></g><circle cx="1816" cy="725.500" r="5.300" fill="#1b1b1b"/>';
P('M1778.500 880h13l2-3.500h21l3.500 3.500h13v8h-52.500zM1782 892h45v49q0 3.500-3.500 3.500h-38q-3.500 0-3.500-3.500z', '#1b1b1b', '');
R(1862, 463, 1875, 810.5, '#ccc', 'rx="6"'); R(646, 972, 1649, 984, '#ccc', 'rx="6"');
document.getElementById('ws').innerHTML = o;
```
